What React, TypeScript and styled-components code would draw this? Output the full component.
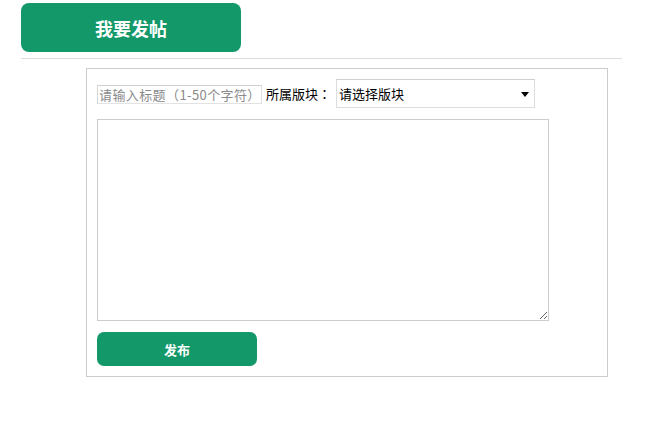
import React, { useState } from "react";
import styled, { createGlobalStyle } from "styled-components";

const GlobalStyle = createGlobalStyle`
	html, body {
		margin: 0;
		padding: 0;
		background: #ffffff;
	}
	body {
		font-family: "Noto Sans CJK SC", "Liberation Sans", sans-serif;
		font-size: 13px;
		color: #000;
	}
`;

const Page = styled.div`
	padding: 3px 0 0 21px;
	width: 601px;
`;

const Header = styled.div`
	display: flex;
	padding-bottom: 6px;
	border-bottom: 1px solid #dcdcdc;
`;

const TitleTab = styled.div`
	width: 220px;
	height: 49px;
	border-radius: 8px;
	background: #139869;
	color: #fff;
	font-size: 18px;
	font-weight: 700;
	display: flex;
	align-items: center;
	justify-content: center;
`;

const FormBox = styled.form`
	margin: 9px 0 0 65px;
	width: 500px;
	border: 1px solid #cccccc;
	padding: 10px;
	display: flex;
	flex-direction: column;
	gap: 11px;
`;

const TopRow = styled.div`
	display: flex;
	align-items: center;
	height: 29px;
`;

const TitleInput = styled.input`
	box-sizing: border-box;
	width: 165px;
	height: 19px;
	margin: 1px 4px 0 0;
	padding: 0 1px;
	border: 1px solid #e2e2e2;
	border-top-color: #cfcfcf;
	border-left-color: #d6d6d6;
	font-family: "Noto Sans CJK SC", sans-serif;
	font-size: 13px;
	outline: none;
	&::placeholder {
		color: #8a8a8a;
		text-spacing-trim: space-all;
		font-feature-settings: "halt" 0, "chws" 0, "palt" 0, "pwid" 0;
		letter-spacing: 0.4px;
	}
`;

const Label = styled.span`
	font-family: "Noto Sans CJK JP", "Noto Sans CJK SC", sans-serif;
	font-size: 13px;
	color: #000;
	margin-right: 5px;
	white-space: nowrap;
`;

const SelectWrap = styled.div`
	position: relative;
	width: 199px;
	height: 29px;

	&::after {
		content: "";
		position: absolute;
		right: 6px;
		top: 13px;
		border-left: 4px solid transparent;
		border-right: 4px solid transparent;
		border-top: 5px solid #000;
		pointer-events: none;
	}
`;

const BoardSelect = styled.select`
	appearance: none;
	box-sizing: border-box;
	width: 100%;
	height: 100%;
	border: 1px solid #dddddd;
	border-top-color: #cfcfcf;
	background: #fff;
	padding: 0 2px;
	font-family: inherit;
	font-size: 13px;
	color: #000;
	outline: none;
	border-radius: 0;
`;

const Content = styled.textarea`
	box-sizing: border-box;
	width: 452px;
	height: 202px;
	border: 1px solid #cccccc;
	font-family: inherit;
	font-size: 13px;
	outline: none;
	margin: 0;
	display: block;
`;

const SubmitButton = styled.button`
	width: 160px;
	height: 34px;
	border: none;
	border-radius: 7px;
	background: #139869;
	color: #fff;
	font-family: inherit;
	font-size: 13px;
	font-weight: 700;
	cursor: pointer;
	padding: 0;
`;

const App = () => {
	const [title, setTitle] = useState<string>("");
	const [board, setBoard] = useState<string>("");
	const [body, setBody] = useState<string>("");

	return (
		<>
			<GlobalStyle />
			<Page>
				<Header>
					<TitleTab>我要发帖</TitleTab>
				</Header>
				<FormBox onSubmit={(e) => e.preventDefault()}>
					<TopRow>
						<TitleInput
							type="text"
							placeholder="请输入标题（1-50个字符）"
							value={title}
							onChange={(e) => setTitle(e.target.value)}
						/>
						<Label>所属版块：</Label>
						<SelectWrap>
							<BoardSelect value={board} onChange={(e) => setBoard(e.target.value)}>
								<option value="">请选择版块</option>
							</BoardSelect>
						</SelectWrap>
					</TopRow>
					<Content value={body} onChange={(e) => setBody(e.target.value)} />
					<div>
						<SubmitButton type="submit">发布</SubmitButton>
					</div>
				</FormBox>
			</Page>
		</>
	);
};

export default App;
